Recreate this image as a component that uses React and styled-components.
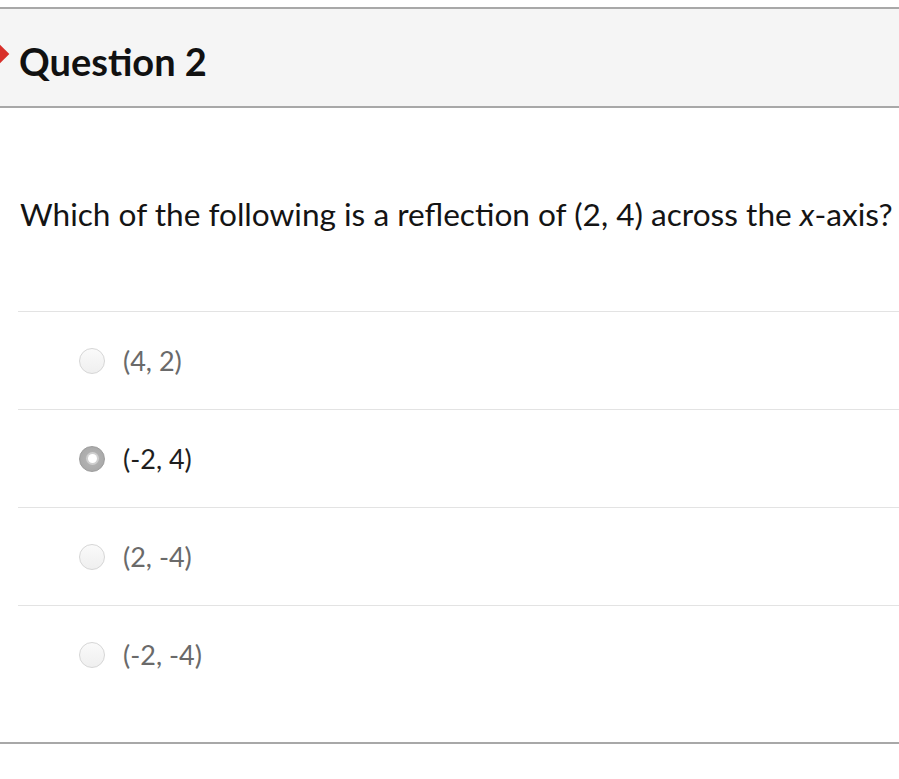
import React from 'react';
import styled, { createGlobalStyle } from 'styled-components';

const GlobalStyle = createGlobalStyle`
  body {
    margin: 0;
    background: #fff;
    font-family: Lato, "Open Sans", sans-serif;
    overflow: hidden;
  }
`;

const Page = styled.div`
  width: 899px;
  height: 779px;
  padding-top: 7px;
  box-sizing: border-box;
`;

const Question = styled.section`
  border-top: 2px solid #a8a8a8;
  border-bottom: 2px solid #a8a8a8;
`;

const Header = styled.header`
  position: relative;
  height: 99px;
  box-sizing: border-box;
  padding: 6px 0 0 19px;
  background: #f5f5f5;
  border-bottom: 2px solid #a8a8a8;
  display: flex;
  align-items: center;
`;

const Marker = styled.span`
  position: absolute;
  left: -10px;
  top: 37px;
  width: 16px;
  height: 16px;
  background: #d8302a;
  transform: rotate(45deg);
`;

const Title = styled.h2`
  margin: 0;
  font-size: 38px;
  font-weight: 700;
  color: #111;
`;

const Body = styled.div`
  padding: 0 0 39px 18px;
`;

const Prompt = styled.p`
  margin: 0;
  padding: 85px 0 0 2px;
  height: 118px;
  box-sizing: content-box;
  font-size: 31.6px;
  color: #141414;
  white-space: nowrap;
  line-height: 42px;

  em {
    font-style: italic;
  }
`;

const Answers = styled.ul`
  list-style: none;
  margin: 0;
  padding: 0;
`;

const Answer = styled.li`
  height: 97px;
  border-top: 1px solid #e3e3e3;
  display: flex;
  align-items: center;
  padding-left: 61px;
  gap: 18px;
  font-size: 27px;
  color: ${({ selected }) => (selected ? '#1e1e1e' : '#6a6a6a')};
`;

const Radio = styled.span`
  width: 26px;
  height: 26px;
  border-radius: 50%;
  box-sizing: border-box;
  display: flex;
  align-items: center;
  justify-content: center;
  border: 1px solid ${({ selected }) => (selected ? '#9c9c9c' : '#d6d6d6')};
  background: ${({ selected }) =>
    selected
      ? 'radial-gradient(circle, #b8b8b8 0%, #a4a4a4 100%)'
      : 'linear-gradient(#fafafa, #efefef)'};

  &::after {
    content: '';
    display: ${({ selected }) => (selected ? 'block' : 'none')};
    width: 9px;
    height: 9px;
    border-radius: 50%;
    background: #fff;
    box-shadow: 0 0 0 2px #cfcfcf;
  }
`;

const options = [
  { label: '(4, 2)' },
  { label: '(-2, 4)', selected: true },
  { label: '(2, -4)' },
  { label: '(-2, -4)' },
];

const App = () => (
  <Page>
    <GlobalStyle />
    <Question>
      <Header>
        <Marker />
        <Title>Question 2</Title>
      </Header>
      <Body>
        <Prompt>
          Which of the following is a reflection of (2, 4) across the <em>x</em>-axis?
        </Prompt>
        <Answers>
          {options.map((o) => (
            <Answer key={o.label} selected={o.selected}>
              <Radio selected={o.selected} />
              {o.label}
            </Answer>
          ))}
        </Answers>
      </Body>
    </Question>
  </Page>
);

export default App;
